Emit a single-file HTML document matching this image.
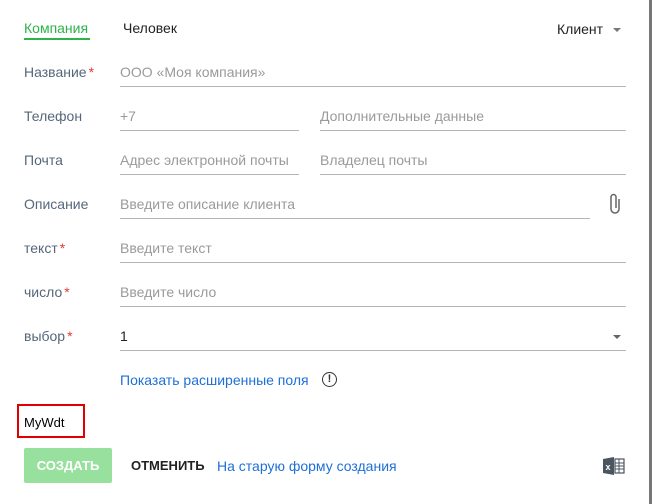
<!DOCTYPE html>
<html><head><meta charset="utf-8"><style>
body{margin:0;width:652px;height:504px;background:#fff;font-family:"Liberation Sans",sans-serif;font-size:14px;position:relative;overflow:hidden}
.a{position:absolute;white-space:nowrap}
.lbl{color:#56677a;left:24px}
.ph{color:#9a9a9a}
.ln{position:absolute;height:1px;background:#b5b5b5}
.st{color:#e53935;margin-left:2px}
</style></head><body>
<div style="position:absolute;right:0;top:0;width:3px;height:504px;background:#777"></div>
<div class="a" style="left:24px;top:20px;color:#2db34a">Компания</div>
<div style="position:absolute;left:24px;top:38px;width:66px;height:2px;background:#2db34a"></div>
<div class="a" style="left:123px;top:20px;color:#222">Человек</div>
<div class="a" style="left:557px;top:21px;color:#222">Клиент</div>
<div style="position:absolute;left:613px;top:28px;border:4px solid transparent;border-top:4px solid #777;border-bottom:0"></div>

<div class="a lbl" style="top:64px">Название<span class="st">*</span></div>
<div class="a ph" style="left:120px;top:64px">ООО «Моя компания»</div>
<div class="ln" style="left:120px;top:86px;width:506px"></div>

<div class="a lbl" style="top:108px">Телефон</div>
<div class="a ph" style="left:120px;top:108px">+7</div>
<div class="ln" style="left:120px;top:130px;width:179px"></div>
<div class="a ph" style="left:320px;top:108px">Дополнительные данные</div>
<div class="ln" style="left:320px;top:130px;width:306px"></div>

<div class="a lbl" style="top:152px">Почта</div>
<div class="a ph" style="left:120px;top:152px">Адрес электронной почты</div>
<div class="ln" style="left:120px;top:174px;width:179px"></div>
<div class="a ph" style="left:320px;top:152px">Владелец почты</div>
<div class="ln" style="left:320px;top:174px;width:306px"></div>

<div class="a lbl" style="top:196px">Описание</div>
<div class="a ph" style="left:120px;top:196px">Введите описание клиента</div>
<div class="ln" style="left:120px;top:218px;width:470px"></div>
<svg style="position:absolute;left:608px;top:192px" width="14" height="24" viewBox="0 0 14 24"><path d="M11 7v10a4 4 0 0 1-8 0V5a2.5 2.5 0 0 1 5 0v11" fill="none" stroke="#666" stroke-width="1.5"/></svg>

<div class="a lbl" style="top:240px">текст<span class="st">*</span></div>
<div class="a ph" style="left:120px;top:240px">Введите текст</div>
<div class="ln" style="left:120px;top:262px;width:506px"></div>

<div class="a lbl" style="top:284px">число<span class="st">*</span></div>
<div class="a ph" style="left:120px;top:284px">Введите число</div>
<div class="ln" style="left:120px;top:306px;width:506px"></div>

<div class="a lbl" style="top:328px">выбор<span class="st">*</span></div>
<div class="a" style="left:120px;top:328px;color:#222">1</div>
<div style="position:absolute;left:613px;top:335px;border:4px solid transparent;border-top:4px solid #666;border-bottom:0"></div>
<div class="ln" style="left:120px;top:350px;width:506px"></div>

<div class="a" style="left:120px;top:372px;color:#1e6fd9">Показать расширенные поля</div>
<div style="position:absolute;left:322px;top:372px;width:13px;height:13px;border:1.5px solid #333;border-radius:50%;font:bold 11px 'Liberation Sans';text-align:center;line-height:13px;color:#333">!</div>

<div style="position:absolute;left:17px;top:404px;width:68px;height:34px;border:2px solid #e00000;box-sizing:border-box"></div>
<div class="a" style="left:24px;top:415px;color:#000;font-size:13px">MyWdt</div>

<div style="position:absolute;left:24px;top:448px;width:88px;height:35px;background:#98e09e;border-radius:2px;color:#fff;font-weight:bold;font-size:13px;text-align:center;line-height:35px">СОЗДАТЬ</div>
<div class="a" style="left:131px;top:458px;color:#222;font-weight:bold;font-size:13px">ОТМЕНИТЬ</div>
<div class="a" style="left:217px;top:458px;color:#1e6fd9">На старую форму создания</div>
<svg style="position:absolute;left:603px;top:456px" width="22" height="20" viewBox="0 0 22 20"><path d="M0 3l11-2v18L0 17z" fill="#4a5560"/><text x="2.5" y="14" font-family="Liberation Sans" font-size="9" font-weight="bold" fill="#fff">x</text><rect x="12" y="3" width="9" height="14" fill="none" stroke="#4a5560" stroke-width="1.2"/><path d="M12 7h9M12 10h9M12 13h9M16 3v14" stroke="#4a5560" stroke-width="1"/></svg>
</body></html>
